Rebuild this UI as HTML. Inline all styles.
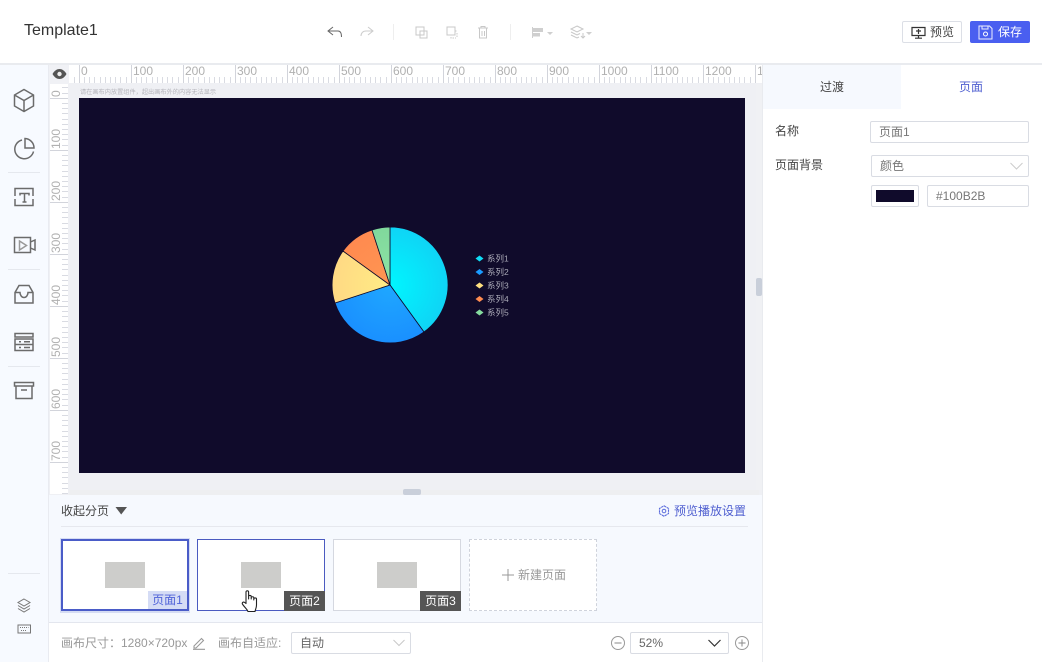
<!DOCTYPE html>
<html lang="zh">
<head>
<meta charset="utf-8">
<title>Template1</title>
<style>
html,body{margin:0;padding:0;background:#fff}
body{width:1042px;height:662px;position:relative;overflow:hidden;font-family:"Liberation Sans","Noto Sans CJK SC",sans-serif;font-size:12px;color:#555}
.a{position:absolute;box-sizing:border-box}
.t{position:absolute;white-space:nowrap;line-height:16px}
.in{position:absolute;box-sizing:border-box;background:#fff;border:1px solid #d9dce3;border-radius:2px;height:22px;line-height:20px;padding-left:8px;color:#666;white-space:nowrap}
svg{position:absolute;overflow:visible}
.ic{fill:none;stroke:#666;stroke-width:1.3}
.ln{position:absolute;background:#e6e8ee;height:1px}
</style>
</head>
<body>
<!-- header -->
<div class="t" style="left:24px;top:21px;font-size:16px;line-height:20px;color:#333">Template1</div>
<svg style="left:0;top:0" width="1042" height="64">
 <path d="M333 27l-5 4 5 4M328 31h10c2.500 0 3.500 2 3.500 6" fill="none" stroke="#666" stroke-width="1"/>
 <path d="M368 27l5 4-5 4M373 31h-7c-3 0-5 2-5 5" fill="none" stroke="#ccc" stroke-width="1"/>
 <rect x="393" y="24" width="1" height="16" fill="#eee"/>
 <rect x="510" y="24" width="1" height="16" fill="#eee"/>
 <g fill="none" stroke="#c8c8c8" stroke-width="1">
  <rect x="416" y="27" width="8" height="8"/><rect x="420" y="31" width="7" height="7"/>
  <rect x="447" y="27" width="8" height="8"/><path d="M455 31h2M457 33v5M451 37v1h5" stroke-dasharray="1.500 1"/>
  <path d="M478 28h10M481 28v-1.500h4V28M479.500 28v10h7V28M482 31v5M484.500 31v5"/>
 </g>
 <g fill="#cfcfcf">
  <rect x="532" y="27" width="1" height="11"/><rect x="533" y="28" width="10" height="4"/><rect x="533" y="33" width="7" height="3.500"/>
  <path d="M547 32h6l-3 3zM586 32h6l-3 3z"/>
 </g>
 <g fill="none" stroke="#c8c8c8" stroke-width="1">
  <path d="M577 26l6 3-6 3-6-3zM571 32l6 3 3-1.500M571 35l6 3 2-1M583 33v5M581 36l2 2 2-2"/>
 </g>
</svg>
<div class="a" style="left:902px;top:21px;width:60px;height:22px;border:1px solid #dcdfe6;border-radius:2px;background:#fff"></div>
<svg style="left:911px;top:26px" width="16" height="13"><path d="M1 1.500h13v8H1zM7.500 9.500v2.500M4 12.200h7M5 5h5M7.500 3v5" fill="none" stroke="#333" stroke-width="1.200"/></svg>
<div class="t" style="left:930px;top:24px;color:#444">预览</div>
<div class="a" style="left:970px;top:21px;width:60px;height:22px;background:#4a5ff0;border-radius:2px"></div>
<svg style="left:978px;top:25px" width="15" height="15"><path d="M1 1h10.500L14 3.500V14H1zM4 1v3h6V1" fill="none" stroke="#fff" stroke-width="1" opacity=".9"/><circle cx="7.500" cy="9" r="2" fill="none" stroke="#fff"/></svg>
<div class="t" style="left:998px;top:24px;color:#fff">保存</div>
<div class="a" style="left:0;top:63px;width:1042px;height:2px;background:#e9ebef"></div>

<!-- left sidebar -->
<div class="a" style="left:0;top:65px;width:49px;height:597px;background:#f7faff;border-right:1px solid #e9ebf1"></div>
<svg style="left:0;top:65px" width="48" height="597">
 <g fill="none" stroke="#6b6b6b" stroke-width="1.500">
  <path d="M24 24.500l9.500 5.500v11L24 46.500 14.500 41V30zM14.500 30L24 35.500 33.500 30M24 35.500v11"/>
  <path d="M22 75a9.500 9.500 0 1 0 11.500 11.500"/><path d="M25 73.500V83h9a9.500 9.500 0 0 0-9-9.500z"/>
  <path d="M15 131v-7.500h18v7.500M15 134v6.500h18V134"/><path d="M20 130.500v-2h9v2M24.500 128.500v8.500M22.500 137h4"/>
  <path d="M14.500 172.500h16v15h-16zM30.500 177l4.500-2v10l-4.500-2"/><path d="M19.500 176l7 4.500-7 4.500z" stroke="#999"/>
  <path d="M19 220.500h10l4 7V238H15v-10.500zM15 227.500h5c0 3 2 5 4 5s4-2 4-5h5"/>
  <path d="M15 268.500h18v3.500H15zM15 274h18v5.500H15zM15 279.500h18v6H15zM19 276.800h2M24 276.800h6M19 282.500h2M24 282.500h6"/>
  <path d="M14.500 317.500h19v3.500h-19zM16 321v12.500h16V321M21 325h6"/>
 </g>
 <g fill="#e5e8ee"><rect x="8" y="107" width="32" height="1"/><rect x="8" y="204" width="32" height="1"/><rect x="8" y="301" width="32" height="1"/><rect x="8" y="508" width="32" height="1"/></g>
 <g class="ic" style="stroke:#777;stroke-width:1">
  <path d="M24 534l6 3.500-6 3.500-6-3.500zM18 540.500l6 3.500 6-3.500M18 543.500l6 3.500 6-3.500"/>
  <rect x="18" y="560" width="12.500" height="8"/><path d="M20 562.500h8.500M21 565.500h6" stroke-dasharray="1 1"/>
 </g>
</svg>

<!-- ruler and canvas -->
<div class="a" style="left:49px;top:65px;width:714px;height:430px;background:#eff0f4"></div>
<div class="a" style="left:49px;top:65px;width:20px;height:19px;background:#f0f1f5"></div>
<svg style="left:52px;top:68px" width="15" height="12"><path d="M.5 6C2.500 2.500 5 1 7.500 1s5 1.500 7 5c-2 3.500-4.500 5-7 5s-5-1.500-7-5z" fill="#555"/><circle cx="7.500" cy="6" r="2.200" fill="#eee"/></svg>
<svg style="left:0;top:0" width="1042" height="662">
 <defs>
  <pattern id="px" x="79" y="77" width="52" height="6" patternUnits="userSpaceOnUse"><g fill="#d9dbe2"><rect x="5" width="1" height="6"/><rect x="10" width="1" height="6"/><rect x="15" width="1" height="6"/><rect x="21" width="1" height="6"/><rect x="26" width="1" height="6"/><rect x="31" width="1" height="6"/><rect x="36" width="1" height="6"/><rect x="41" width="1" height="6"/><rect x="47" width="1" height="6"/></g></pattern>
  <pattern id="py" x="62" y="98" width="6" height="52" patternUnits="userSpaceOnUse"><g fill="#d9dbe2"><rect y="5" width="6" height="1"/><rect y="10" width="6" height="1"/><rect y="15" width="6" height="1"/><rect y="21" width="6" height="1"/><rect y="26" width="6" height="1"/><rect y="31" width="6" height="1"/><rect y="36" width="6" height="1"/><rect y="41" width="6" height="1"/><rect y="47" width="6" height="1"/></g></pattern>
  <radialGradient id="g1" gradientUnits="userSpaceOnUse" cx="390" cy="285" r="58"><stop offset="0" stop-color="#00f6ff"/><stop offset="1" stop-color="#0fd4f5"/></radialGradient>
  <radialGradient id="g2" gradientUnits="userSpaceOnUse" cx="390" cy="285" r="58"><stop offset="0" stop-color="#1fa8ff"/><stop offset="1" stop-color="#1a90ff"/></radialGradient>
  <radialGradient id="g3" gradientUnits="userSpaceOnUse" cx="390" cy="285" r="58"><stop offset="0" stop-color="#ffec85"/><stop offset="1" stop-color="#ffd984"/></radialGradient>
  <radialGradient id="g4" gradientUnits="userSpaceOnUse" cx="390" cy="285" r="58"><stop offset="0" stop-color="#ff9652"/><stop offset="1" stop-color="#ff8a50"/></radialGradient>
  <radialGradient id="g5" gradientUnits="userSpaceOnUse" cx="390" cy="285" r="58"><stop offset="0" stop-color="#8ee5a5"/><stop offset="1" stop-color="#80d89c"/></radialGradient>
 </defs>
 <rect x="69" y="65" width="694" height="18" fill="#fff"/>
 <rect x="69" y="77" width="690" height="6" fill="url(#px)"/>
 <rect x="50" y="84" width="18" height="410" fill="#fff"/>
 <rect x="62" y="84" width="6" height="410" fill="url(#py)"/>
 <g fill="#d2d4db">
  <rect x="79" y="65" width="1" height="18"/><rect x="131" y="65" width="1" height="18"/><rect x="183" y="65" width="1" height="18"/><rect x="235" y="65" width="1" height="18"/><rect x="287" y="65" width="1" height="18"/><rect x="339" y="65" width="1" height="18"/><rect x="391" y="65" width="1" height="18"/><rect x="443" y="65" width="1" height="18"/><rect x="495" y="65" width="1" height="18"/><rect x="547" y="65" width="1" height="18"/><rect x="599" y="65" width="1" height="18"/><rect x="651" y="65" width="1" height="18"/><rect x="703" y="65" width="1" height="18"/><rect x="755" y="65" width="1" height="18"/>
  <rect x="50" y="98" width="18" height="1"/><rect x="50" y="150" width="18" height="1"/><rect x="50" y="202" width="18" height="1"/><rect x="50" y="254" width="18" height="1"/><rect x="50" y="306" width="18" height="1"/><rect x="50" y="358" width="18" height="1"/><rect x="50" y="410" width="18" height="1"/><rect x="50" y="462" width="18" height="1"/>
 </g>
 <g font-family="Liberation Sans" font-size="12" fill="#b0b0b0">
  <text x="81" y="75">0</text><text x="133" y="75">100</text><text x="185" y="75">200</text><text x="237" y="75">300</text><text x="289" y="75">400</text><text x="341" y="75">500</text><text x="393" y="75">600</text><text x="445" y="75">700</text><text x="497" y="75">800</text><text x="549" y="75">900</text><text x="601" y="75">1000</text><text x="653" y="75">1100</text><text x="705" y="75">1200</text><text x="757" y="75">1</text>
  <text transform="translate(60,97) rotate(-90)">0</text><text transform="translate(60,149) rotate(-90)">100</text><text transform="translate(60,201) rotate(-90)">200</text><text transform="translate(60,253) rotate(-90)">300</text><text transform="translate(60,305) rotate(-90)">400</text><text transform="translate(60,357) rotate(-90)">500</text><text transform="translate(60,409) rotate(-90)">600</text><text transform="translate(60,461) rotate(-90)">700</text>
 </g>
 <rect x="79" y="98" width="666" height="375" fill="#100B2B"/>
 <g stroke="#100B2B" stroke-width=".8">
  <path d="M390 285V227A58 58 0 0 1 424 332Z" fill="url(#g1)"/>
  <path d="M390 285L424 332A58 58 0 0 1 335 303Z" fill="url(#g2)"/>
  <path d="M390 285L335 303A58 58 0 0 1 343 251Z" fill="url(#g3)"/>
  <path d="M390 285L343 251A58 58 0 0 1 372 230Z" fill="url(#g4)"/>
  <path d="M390 285L372 230A58 58 0 0 1 390 227Z" fill="url(#g5)"/>
 </g>
 <g>
  <path d="M475.500 258.500l4-3 4 3-4 3z" fill="#0fdcf5"/>
  <path d="M475.500 272l4-3 4 3-4 3z" fill="#1a9bff"/>
  <path d="M475.500 285.500l4-3 4 3-4 3z" fill="#ffe080"/>
  <path d="M475.500 299l4-3 4 3-4 3z" fill="#ff8c50"/>
  <path d="M475.500 312.500l4-3 4 3-4 3z" fill="#85dc9f"/>
 </g>
 <g font-family="Liberation Sans,Noto Sans CJK SC,sans-serif" font-size="8.500" fill="#a9a9b6">
  <text x="487" y="261.500">系列1</text><text x="487" y="275">系列2</text><text x="487" y="288.500">系列3</text><text x="487" y="302">系列4</text><text x="487" y="315.500">系列5</text>
 </g>
 <text x="80" y="94" font-family="Liberation Sans,Noto Sans CJK SC,sans-serif" font-size="6.200" fill="#b5b5bb">请在画布内放置组件，超出画布外的内容无法显示</text>
 <!-- scrollbars -->
 <rect x="69" y="490" width="690" height="5" fill="#eeeff1"/>
 <rect x="403" y="489" width="18" height="6" rx="2" fill="#c9cfda"/>
 <rect x="756" y="84" width="6" height="406" fill="#f0f1f4"/>
 <rect x="756" y="278" width="6" height="18" rx="2" fill="#c9cfda"/>
</svg>

<!-- pages panel -->
<div class="a" style="left:49px;top:495px;width:714px;height:128px;background:#f6f9fe;border-bottom:1px solid #e3e6ee"></div>
<div class="t" style="left:61px;top:503px;color:#444">收起分页</div>
<svg style="left:115px;top:507px" width="13" height="8"><path d="M.5 0h11.500L6.200 7.500z" fill="#555"/></svg>
<svg style="left:658px;top:505px" width="12" height="12"><path d="M6 .8l4.500 2.600v5.200L6 11.200 1.500 8.600V3.400z" fill="none" stroke="#5a6bdc" stroke-width="1.100" stroke-dasharray="2.500 .6"/><circle cx="6" cy="6" r="1.800" fill="none" stroke="#5a6bdc"/></svg>
<div class="t" style="left:674px;top:503px;color:#4f5fd0">预览播放设置</div>
<div class="ln" style="left:61px;top:526px;width:687px"></div>

<div class="a" style="left:60px;top:538px;width:130px;height:75px;background:#d5dcf3"></div>
<div class="a" style="left:61px;top:539px;width:128px;height:72px;background:#fff;border:2px solid #4a5cc8"></div>
<div class="a" style="left:105px;top:562px;width:40px;height:26px;background:#cdcdcb"></div>
<div class="a" style="left:148px;top:591px;width:39px;height:18px;background:#d5dcf5;color:#4f62d8;line-height:18px;text-align:center">页面1</div>

<div class="a" style="left:197px;top:539px;width:128px;height:72px;background:#fff;border:1px solid #4a5ac0"></div>
<div class="a" style="left:241px;top:562px;width:40px;height:26px;background:#cdcdcb"></div>
<div class="a" style="left:284px;top:591px;width:41px;height:20px;background:#555;color:#fff;line-height:20px;text-align:center">页面2</div>

<div class="a" style="left:333px;top:539px;width:128px;height:72px;background:#fff;border:1px solid #d5d8e0"></div>
<div class="a" style="left:377px;top:562px;width:40px;height:26px;background:#cdcdcb"></div>
<div class="a" style="left:420px;top:591px;width:41px;height:20px;background:#555;color:#fff;line-height:20px;text-align:center">页面3</div>

<div class="a" style="left:469px;top:539px;width:128px;height:72px;background:#fff;border:1px dashed #cfd3dc"></div>
<svg style="left:502px;top:569px" width="12" height="12"><path d="M6 0v12M0 6h12" stroke="#999" stroke-width="1"/></svg>
<div class="t" style="left:518px;top:567px;color:#999">新建页面</div>

<svg style="left:241px;top:590px" width="18" height="23"><path d="M5 2c0-1.600 2.600-1.600 2.600 0V9V6.500c0-1.400 2.600-1.400 2.600 0V9 7.800c0-1.400 2.600-1.400 2.600 0V10 9c0-1.400 2.700-1.400 2.700 0v6c0 2.800-1 4-1.500 6.500H7c-1-2.500-2.800-3.500-5.300-7-1.200-1.600.5-3.200 2-2L5 13.500z" fill="#fff" stroke="#222" stroke-width="1.100" stroke-linejoin="round"/></svg>

<!-- footer -->
<div class="t" style="left:61px;top:635px;color:#999">画布尺寸：1280×720px</div>
<svg style="left:192px;top:636px" width="14" height="14"><path d="M2 10L9.500 2.500l2 2L4 12H2zM1 13.300h12" fill="none" stroke="#999" stroke-width="1.100"/></svg>
<div class="t" style="left:218px;top:635px;color:#999">画布自适应:</div>
<div class="in" style="left:291px;top:632px;width:120px">自动</div>
<svg style="left:393px;top:639px" width="12" height="8"><path d="M.5 1L6 6.500 11.500 1" fill="none" stroke="#c8c8c8"/></svg>
<svg style="left:611px;top:636px" width="14" height="14"><circle cx="7" cy="7" r="6.500" fill="none" stroke="#999"/><path d="M3.500 7h7" stroke="#888"/></svg>
<div class="in" style="left:630px;top:632px;width:99px">52%</div>
<svg style="left:708px;top:639px" width="13" height="8"><path d="M.5 1L6.500 7 12.500 1" fill="none" stroke="#333" stroke-width="1.200"/></svg>
<svg style="left:735px;top:636px" width="14" height="14"><circle cx="7" cy="7" r="6.500" fill="none" stroke="#999"/><path d="M3.500 7h7M7 3.500v7" stroke="#888"/></svg>

<!-- right panel -->
<div class="a" style="left:762px;top:65px;width:1px;height:597px;background:#e9ebef"></div>
<div class="a" style="left:763px;top:65px;width:138px;height:44px;background:#f6f9fe"></div>
<div class="t" style="left:820px;top:79px;color:#444">过渡</div>
<div class="t" style="left:959px;top:79px;color:#4f5fd0">页面</div>
<div class="t" style="left:775px;top:123px;color:#444">名称</div>
<div class="in" style="left:870px;top:121px;width:159px;color:#777">页面1</div>
<div class="t" style="left:775px;top:157px;color:#444">页面背景</div>
<div class="in" style="left:871px;top:155px;width:158px;color:#777">颜色</div>
<svg style="left:1010px;top:162px" width="13" height="8"><path d="M.5 1L6.500 7 12.500 1" fill="none" stroke="#ccc"/></svg>
<div class="in" style="left:871px;top:185px;width:48px;padding:0"></div>
<div class="a" style="left:876px;top:190px;width:38px;height:12px;background:#100B2B"></div>
<div class="in" style="left:927px;top:185px;width:102px;color:#777">#100B2B</div>
</body>
</html>
